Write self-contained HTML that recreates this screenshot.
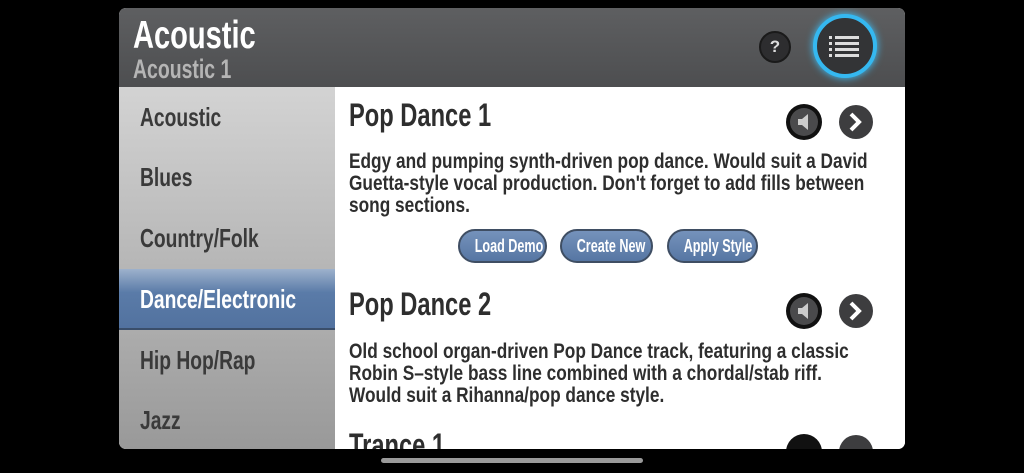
<!DOCTYPE html>
<html><head><meta charset="utf-8"><style>
*{margin:0;padding:0;box-sizing:border-box}
body{width:1024px;height:473px;background:#000;position:relative;overflow:hidden;font-family:"Liberation Sans",sans-serif;font-weight:bold}
.s{display:inline-block;transform-origin:0 50%;white-space:nowrap}
.panel{position:absolute;left:119px;top:8px;width:786px;height:441px;border-radius:7px;overflow:hidden;background:#fff}
.hdr{position:absolute;left:0;top:0;width:786px;height:79px;background:linear-gradient(#5e5f61,#4d4e50)}
.h1{position:absolute;left:14px;top:6px;font-size:39px;color:#fff}
.h2{position:absolute;left:14px;top:46px;font-size:27px;color:#b5b5b5}
.side{position:absolute;left:0;top:79px;width:216px;height:362px;background:linear-gradient(#d3d3d3,#999)}
.it{position:absolute;left:21px;font-size:26px;color:#3a3a3a;height:61px;line-height:61px}
.it .s{transform:scaleX(0.74)}
.sel{position:absolute;left:0;top:182px;width:216px;height:61px;background:linear-gradient(#9db1cc,#5a7ba8 40%,#52729f);border-bottom:2px solid #3a4e6a}
.content{position:absolute;left:216px;top:79px;right:0;bottom:0;background:#fff;color:#2e2e2e}
.t{position:absolute;left:14px;font-size:32px}
.t .s{transform:scaleX(0.74)}
.p{position:absolute;left:14px;font-size:21px;line-height:22px;white-space:nowrap;transform:scaleX(0.822);transform-origin:0 0}
.btn{position:absolute;top:142px;height:34px;border-radius:17px;background:linear-gradient(#7592bb,#5676a3);border:2px solid #3f4e63;color:#fff;font-size:18px;text-align:center;line-height:31px}
.btn .s{transform:scaleX(0.7);transform-origin:50% 50%}
.circ{position:absolute;border-radius:50%}
</style></head><body>
<div class="panel">
 <div class="hdr">
  <div class="h1"><span class="s" style="transform:scaleX(0.745)">Acoustic</span></div><div class="h2"><span class="s" style="transform:scaleX(0.72)">Acoustic 1</span></div>
  <div class="circ" style="left:640px;top:23px;width:32px;height:32px;background:#2d2d2f;border:2px solid #1a1a1a;color:#ddd;font-size:17px;text-align:center;line-height:28px">?</div>
  <div class="circ" style="left:694px;top:6px;width:64px;height:64px;border:4px solid #35b8f0;box-shadow:0 0 8px #3cc4ff;background:#333436"></div>
  <svg style="position:absolute;left:710px;top:27px" width="30" height="22"><g fill="#ddd"><rect x="0" y="1" width="3" height="3"/><rect x="6" y="1" width="24" height="3"/><rect x="0" y="7" width="3" height="3"/><rect x="6" y="7" width="24" height="3"/><rect x="0" y="13" width="3" height="3"/><rect x="6" y="13" width="24" height="3"/><rect x="0" y="19" width="3" height="3"/><rect x="6" y="19" width="24" height="3"/></g></svg>
 </div>
 <div class="side">
  <div class="sel"></div>
  <div class="it" style="top:0"><span class="s">Acoustic</span></div>
  <div class="it" style="top:60px"><span class="s">Blues</span></div>
  <div class="it" style="top:121px"><span class="s">Country/Folk</span></div>
  <div class="it" style="top:182px;color:#fff"><span class="s">Dance/Electronic</span></div>
  <div class="it" style="top:243px"><span class="s">Hip Hop/Rap</span></div>
  <div class="it" style="top:303px"><span class="s">Jazz</span></div>
 </div>
 <div class="content">
  <div class="t" style="top:10px"><span class="s">Pop Dance 1</span></div>
  <div class="p" style="top:64px">Edgy and pumping synth-driven pop dance. Would suit a David<br>Guetta-style vocal production. Don't forget to add fills between<br>song sections.</div>
  <div class="btn" style="left:123px;width:89px"><span class="s">Load Demo</span></div>
  <div class="btn" style="left:225px;width:93px"><span class="s">Create New</span></div>
  <div class="btn" style="left:332px;width:91px"><span class="s">Apply Style</span></div>
  <div class="t" style="top:199px"><span class="s">Pop Dance 2</span></div>
  <div class="p" style="top:254px">Old school organ-driven Pop Dance track, featuring a classic<br>Robin S–style bass line combined with a chordal/stab riff.<br>Would suit a Rihanna/pop dance style.</div>
  <div class="t" style="top:340px"><span class="s">Trance 1</span></div>
 </div>
</div>
<svg style="position:absolute;left:784px;top:102px" width="90" height="360">
 <g><circle cx="20" cy="20" r="18" fill="#111"/><circle cx="20" cy="20" r="14" fill="#4a4a4c"/><path d="M14 17h4l6-5v16l-6-5h-4z" fill="#ccc"/></g>
 <g><circle cx="72" cy="20" r="17" fill="#3d3d3f"/><path d="M67 12l8 8-8 8" stroke="#fff" stroke-width="4" fill="none"/></g>
 <g transform="translate(0,189)"><circle cx="20" cy="20" r="18" fill="#111"/><circle cx="20" cy="20" r="14" fill="#4a4a4c"/><path d="M14 17h4l6-5v16l-6-5h-4z" fill="#ccc"/><circle cx="72" cy="20" r="17" fill="#3d3d3f"/><path d="M67 12l8 8-8 8" stroke="#fff" stroke-width="4" fill="none"/></g>
</svg>
<div style="position:absolute;left:0;top:449px;width:1024px;height:24px;background:#000"></div>
<svg style="position:absolute;left:784px;top:432px" width="90" height="17"><circle cx="20" cy="20" r="18" fill="#111"/><circle cx="72" cy="20" r="17" fill="#3d3d3f"/></svg>
<div style="position:absolute;left:381px;top:458px;width:262px;height:5px;border-radius:3px;background:#9a9a9a"></div>
</body></html>
